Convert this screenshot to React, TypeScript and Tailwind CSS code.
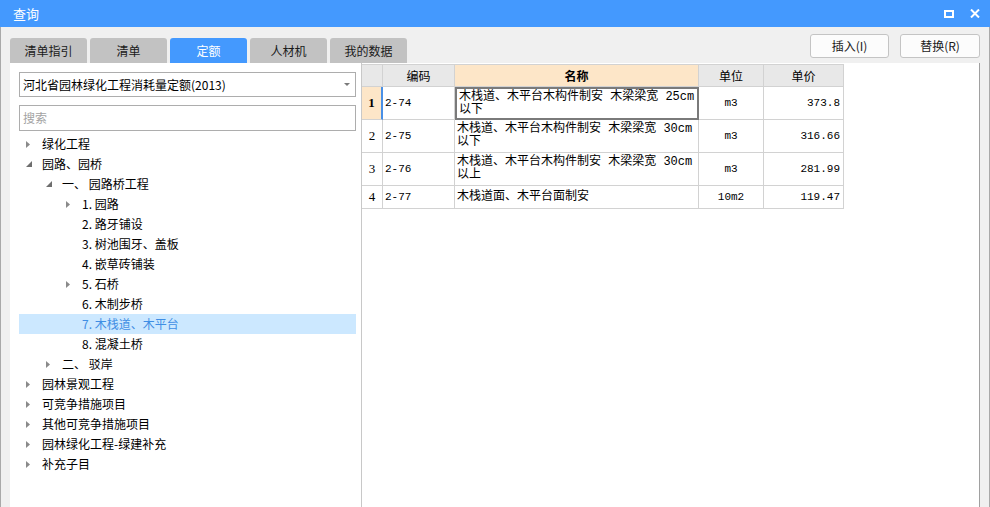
import React from "react";

type TreeNode = {
  label: string;
  level: number;
  state?: "open" | "closed";
  selected?: boolean;
};

const treeData: TreeNode[] = [
  { label: "绿化工程", level: 0, state: "closed" },
  { label: "园路、园桥", level: 0, state: "open" },
  { label: "一、 园路桥工程", level: 1, state: "open" },
  { label: "1. 园路", level: 2, state: "closed" },
  { label: "2. 路牙铺设", level: 2 },
  { label: "3. 树池围牙、盖板", level: 2 },
  { label: "4. 嵌草砖铺装", level: 2 },
  { label: "5. 石桥", level: 2, state: "closed" },
  { label: "6. 木制步桥", level: 2 },
  { label: "7. 木栈道、木平台", level: 2, selected: true },
  { label: "8. 混凝土桥", level: 2 },
  { label: "二、 驳岸", level: 1, state: "closed" },
  { label: "园林景观工程", level: 0, state: "closed" },
  { label: "可竞争措施项目", level: 0, state: "closed" },
  { label: "其他可竞争措施项目", level: 0, state: "closed" },
  { label: "园林绿化工程-绿建补充", level: 0, state: "closed" },
  { label: "补充子目", level: 0, state: "closed" },
];

const rows = [
  { no: "1", code: "2-74", name: ["木栈道、木平台木构件制安 木梁梁宽 25cm", "以下"], unit: "m3", price: "373.8" },
  { no: "2", code: "2-75", name: ["木栈道、木平台木构件制安 木梁梁宽 30cm", "以下"], unit: "m3", price: "316.66" },
  { no: "3", code: "2-76", name: ["木栈道、木平台木构件制安 木梁梁宽 30cm", "以上"], unit: "m3", price: "281.99" },
  { no: "4", code: "2-77", name: ["木栈道面、木平台面制安"], unit: "10m2", price: "119.47" },
];

const tabs = ["清单指引", "清单", "定额", "人材机", "我的数据"];

const cjk = "font-['Noto_Sans_CJK_SC',sans-serif]";
const mono = "font-['Liberation_Mono','Noto_Sans_CJK_SC',monospace]";

function Caret({ state }: { state?: "open" | "closed" }) {
  if (state === "closed")
    return (
      <svg width="4" height="7" viewBox="0 0 4 7">
        <polygon points="0,0 4,3.5 0,7" fill="#8a8a8a" />
      </svg>
    );
  if (state === "open")
    return (
      <svg width="6" height="6" viewBox="0 0 6 6">
        <polygon points="6,0 6,6 0,6" fill="#6e6e6e" />
      </svg>
    );
  return null;
}

export default function App() {
  return (
    <div className={`w-[990px] h-[507px] overflow-hidden bg-[#f0f0f0] flex flex-col ${cjk}`}>
      {/* title bar */}
      <div className="h-[27px] shrink-0 bg-[#4499fe] flex items-center pl-[13px] pr-[10px] text-white">
        <span className="text-[13px]">查询</span>
        <div className="ml-auto flex items-center gap-[16px]">
          <div className="w-[10px] h-[8px] border-2 border-white" />
          <svg width="10" height="9" viewBox="0 0 10 9">
            <path d="M1 0.5 L9 8.5 M9 0.5 L1 8.5" stroke="white" strokeWidth="2" />
          </svg>
        </div>
      </div>

      <div className="flex-1 flex flex-col border-l border-r border-[#a9a9a9] px-[9px] min-h-0">
        {/* tabs + buttons */}
        <div className="h-[36px] shrink-0 flex">
          <div className="flex items-end gap-[3px]">
            {tabs.map((t) => (
              <div
                key={t}
                className={`w-[77px] h-[25px] rounded-t-[3px] flex items-center justify-center text-[12px] ${
                  t === "定额" ? "bg-[#4499fe] text-white" : "bg-[#c2c2c2] text-[#1a1a1a]"
                }`}
              >
                {t}
              </div>
            ))}
          </div>
          <div className="ml-auto flex gap-[11px] pt-[7px]">
            <button className="w-[79px] h-[24px] bg-[#fcfcfc] border border-[#c4c4c4] rounded-[3px] text-[12px] text-[#1a1a1a]">
              插入(I)
            </button>
            <button className="w-[80px] h-[24px] bg-[#fcfcfc] border border-[#c4c4c4] rounded-[3px] text-[12px] text-[#1a1a1a]">
              替换(R)
            </button>
          </div>
        </div>

        {/* main panel */}
        <div className="flex-1 flex bg-white border-r border-[#a0a0a0] min-h-0">
          {/* left */}
          <div className="w-[352px] shrink-0 border-r border-[#c8c8c8] pl-[9px] pr-[5px] pt-[9px] flex flex-col">
            <div className="h-[25px] border border-[#adadad] flex items-center pl-[3px] pr-[5px] text-[12px] text-black">
              <span>河北省园林绿化工程消耗量定额(2013)</span>
              <svg className="ml-auto" width="6" height="3" viewBox="0 0 6 3">
                <polygon points="0,0 6,0 3,3" fill="#7a7a7a" />
              </svg>
            </div>
            <div className="h-[26px] mt-[8px] border border-[#adadad] flex items-center pl-[3px] text-[12px] text-[#a3a3a3]">
              搜索
            </div>
            <div className="mt-[3px]">
              {treeData.map((n) => (
                <div
                  key={n.label}
                  className={`h-[20px] flex items-center text-[12px] ${
                    n.selected ? "bg-[#cce8ff] text-[#3f8ee4]" : "text-black"
                  }`}
                  style={{ paddingLeft: n.level * 20 }}
                >
                  <div className="w-[23px] pl-[7px] flex items-center">
                    <Caret state={n.state} />
                  </div>
                  <span className="whitespace-pre">{n.label}</span>
                </div>
              ))}
            </div>
          </div>

          {/* right: table */}
          <div className="flex-1 pt-[1px]">
            <div className="grid grid-cols-[21px_72px_244px_65px_80px] w-fit text-[12px] text-black">
              <div className="h-[23px] bg-[#e8e8e8] border-r border-b border-t border-[#d2d2d2]" />
              <div className="h-[23px] bg-[#e8e8e8] border-r border-b border-t border-[#d2d2d2] flex items-center justify-center">
                编码
              </div>
              <div className="h-[23px] bg-[#fde6c8] border-r border-b border-t border-[#d2d2d2] flex items-center justify-center font-bold">
                名称
              </div>
              <div className="h-[23px] bg-[#e8e8e8] border-r border-b border-t border-[#d2d2d2] flex items-center justify-center">
                单位
              </div>
              <div className="h-[23px] bg-[#e8e8e8] border-r border-b border-t border-[#d2d2d2] flex items-center justify-center">
                单价
              </div>

              {rows.map((r, i) => {
                const h = r.name.length > 1 ? "h-[33px]" : "h-[23px]";
                const first = i === 0;
                return (
                  <React.Fragment key={r.no}>
                    <div
                      className={`${h} border-b flex items-center justify-center font-['Liberation_Serif',serif] text-[13px] ${
                        first
                          ? "bg-[#fde6c8] font-bold border-r-2 border-r-[#4a90e6] border-b-[#d2d2d2]"
                          : "border-r border-[#d2d2d2]"
                      }`}
                    >
                      {r.no}
                    </div>
                    <div className={`${h} border-r border-b border-[#d2d2d2] flex items-center pl-[2px] text-[11px] ${mono}`}>
                      {r.code}
                    </div>
                    <div
                      className={`${h} ${
                        first ? "border-2 border-[#7a7a7a]" : "border-r border-b border-[#d2d2d2]"
                      } pl-[2px] flex flex-col justify-center leading-[13px] whitespace-nowrap overflow-hidden ${mono}`}
                    >
                      {r.name.map((l) => (
                        <div key={l} className="whitespace-pre">
                          {l}
                        </div>
                      ))}
                    </div>
                    <div className={`${h} border-r border-b border-[#d2d2d2] flex items-center justify-center text-[11px] ${mono}`}>
                      {r.unit}
                    </div>
                    <div className={`${h} border-r border-b border-[#d2d2d2] flex items-center justify-end pr-[3px] text-[11px] ${mono}`}>
                      {r.price}
                    </div>
                  </React.Fragment>
                );
              })}
            </div>
          </div>
        </div>
      </div>
    </div>
  );
}
